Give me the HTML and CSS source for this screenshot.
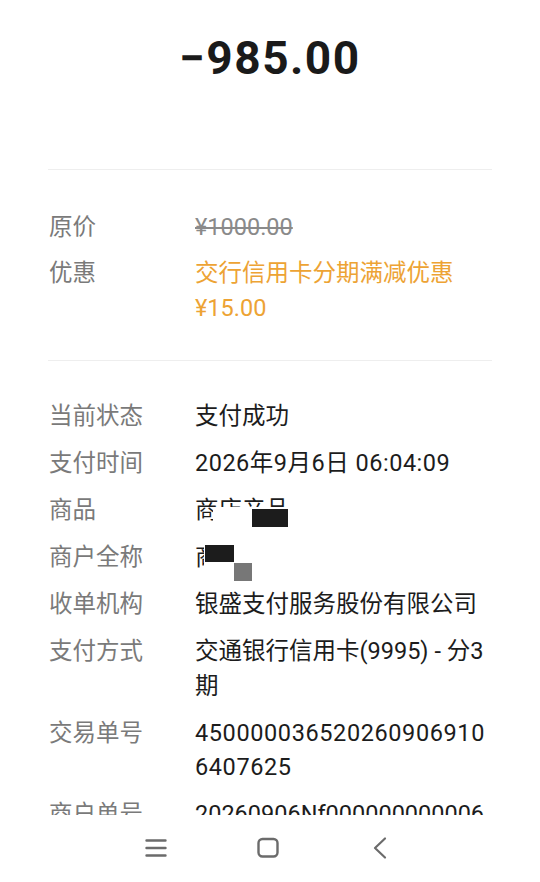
FILE: index.html
```html
<!DOCTYPE html>
<html lang="zh-CN">
<head>
<meta charset="utf-8">
<link rel="stylesheet" href="styles.css">
</head>
<body>
<div class="screen">
  <div class="content">
    <div class="header">
      <div class="amount">−985.00</div>
    </div>
    <div class="section first">
      <div class="row">
        <div class="label">原价</div>
        <div class="value strike">¥1000.00</div>
      </div>
      <div class="row">
        <div class="label">优惠</div>
        <div class="value orange">交行信用卡分期满减优惠<br>¥15.00</div>
      </div>
    </div>
    <div class="section second">
      <div class="row">
        <div class="label">当前状态</div>
        <div class="value">支付成功</div>
      </div>
      <div class="row">
        <div class="label">支付时间</div>
        <div class="value digits">2026年9月6日 06:04:09</div>
      </div>
      <div class="row">
        <div class="label">商品</div>
        <div class="value redacted">商店产品<span class="mask-white m1"></span><span class="mask-black b1"></span></div>
      </div>
      <div class="row">
        <div class="label">商户全称</div>
        <div class="value redacted">商<span class="mask-white m2"></span><span class="mask-black b2"></span><span class="mask-gray g2"></span></div>
      </div>
      <div class="row">
        <div class="label">收单机构</div>
        <div class="value">银盛支付服务股份有限公司</div>
      </div>
      <div class="row">
        <div class="label">支付方式</div>
        <div class="value">交通银行信用卡(9995) - 分3期</div>
      </div>
      <div class="row">
        <div class="label">交易单号</div>
        <div class="value num">4500000365202609069106407625</div>
      </div>
      <div class="row">
        <div class="label">商户单号</div>
        <div class="value single">20260906Nf000000000006</div>
      </div>
    </div>
  </div>
  <div class="navbar">
    <svg class="nav-icon" width="24" height="24" viewBox="0 0 24 24">
      <path d="M2.5 4.5h19M2.5 12h19M2.5 19.5h19" stroke="#6b6b6b" stroke-width="2.4" stroke-linecap="round" fill="none"/>
    </svg>
    <svg class="nav-icon" width="24" height="24" viewBox="0 0 24 24">
      <rect x="2.5" y="3" width="19" height="17.5" rx="4" stroke="#6b6b6b" stroke-width="2.4" fill="none"/>
    </svg>
    <svg class="nav-icon" width="24" height="24" viewBox="0 0 24 24">
      <path d="M17 2.5L7 12l10 9.5" stroke="#6b6b6b" stroke-width="2.2" stroke-linecap="round" stroke-linejoin="round" fill="none"/>
    </svg>
  </div>
</div>
</body>
</html>
```

FILE: styles.css
```css
* { box-sizing: border-box; }
html, body { margin: 0; padding: 0; background: #ffffff; }
body {
  font-family: "Roboto", "Noto Sans CJK SC", sans-serif;
  color: #1a1a1a;
}
.screen {
  width: 540px;
  height: 882px;
  display: flex;
  flex-direction: column;
}
.content {
  height: 815px;
  overflow: hidden;
  padding: 0 48px;
}
.header {
  height: 170px;
  border-bottom: 1px solid #eeeeee;
  padding-top: 30px;
}
.amount {
  text-align: center;
  font-size: 46px;
  line-height: 56px;
  font-weight: 700;
  letter-spacing: 1.5px;
  color: #1a1a1a;
}
.section {
  display: flex;
  flex-direction: column;
  gap: 12.5px;
}
.section.first {
  padding: 40px 0 35px;
  border-bottom: 1px solid #eeeeee;
  gap: 11.5px;
}
.section.second {
  padding-top: 38px;
}
.row {
  display: flex;
  font-size: 23.5px;
  line-height: 34.5px;
}
.label {
  width: 147px;
  flex: none;
  padding-left: 1px;
  color: #7a7a7a;
}
.value {
  flex: 1;
  min-width: 0;
  color: #1c1c1c;
}
.digits { letter-spacing: 0.5px; }
.num {
  word-break: break-all;
  letter-spacing: 0.6px;
}
.single { white-space: nowrap; }
.strike {
  color: #8a8a8a;
  text-decoration: line-through;
  text-decoration-thickness: 2px;
}
.orange { color: #eda334; }
.redacted { position: relative; }
.mask-white, .mask-black, .mask-gray { position: absolute; display: block; }
.mask-white { background: #ffffff; }
.mask-black { background: #1c1c1c; }
.mask-gray { background: #777777; }
.m1 { left: 18px; top: 14px; width: 80px; height: 24px; }
.b1 { left: 57px; top: 16px; width: 36px; height: 18px; }
.m2 { left: 9px; top: 0; width: 90px; height: 34px; }
.b2 { left: 10px; top: 5px; width: 29px; height: 17px; }
.g2 { left: 39px; top: 23px; width: 18px; height: 18px; }
.navbar {
  height: 67px;
  display: flex;
  justify-content: center;
  align-items: center;
  gap: 88px;
  padding-bottom: 1px;
  padding-right: 4px;
}
.nav-icon { display: block; }
```
